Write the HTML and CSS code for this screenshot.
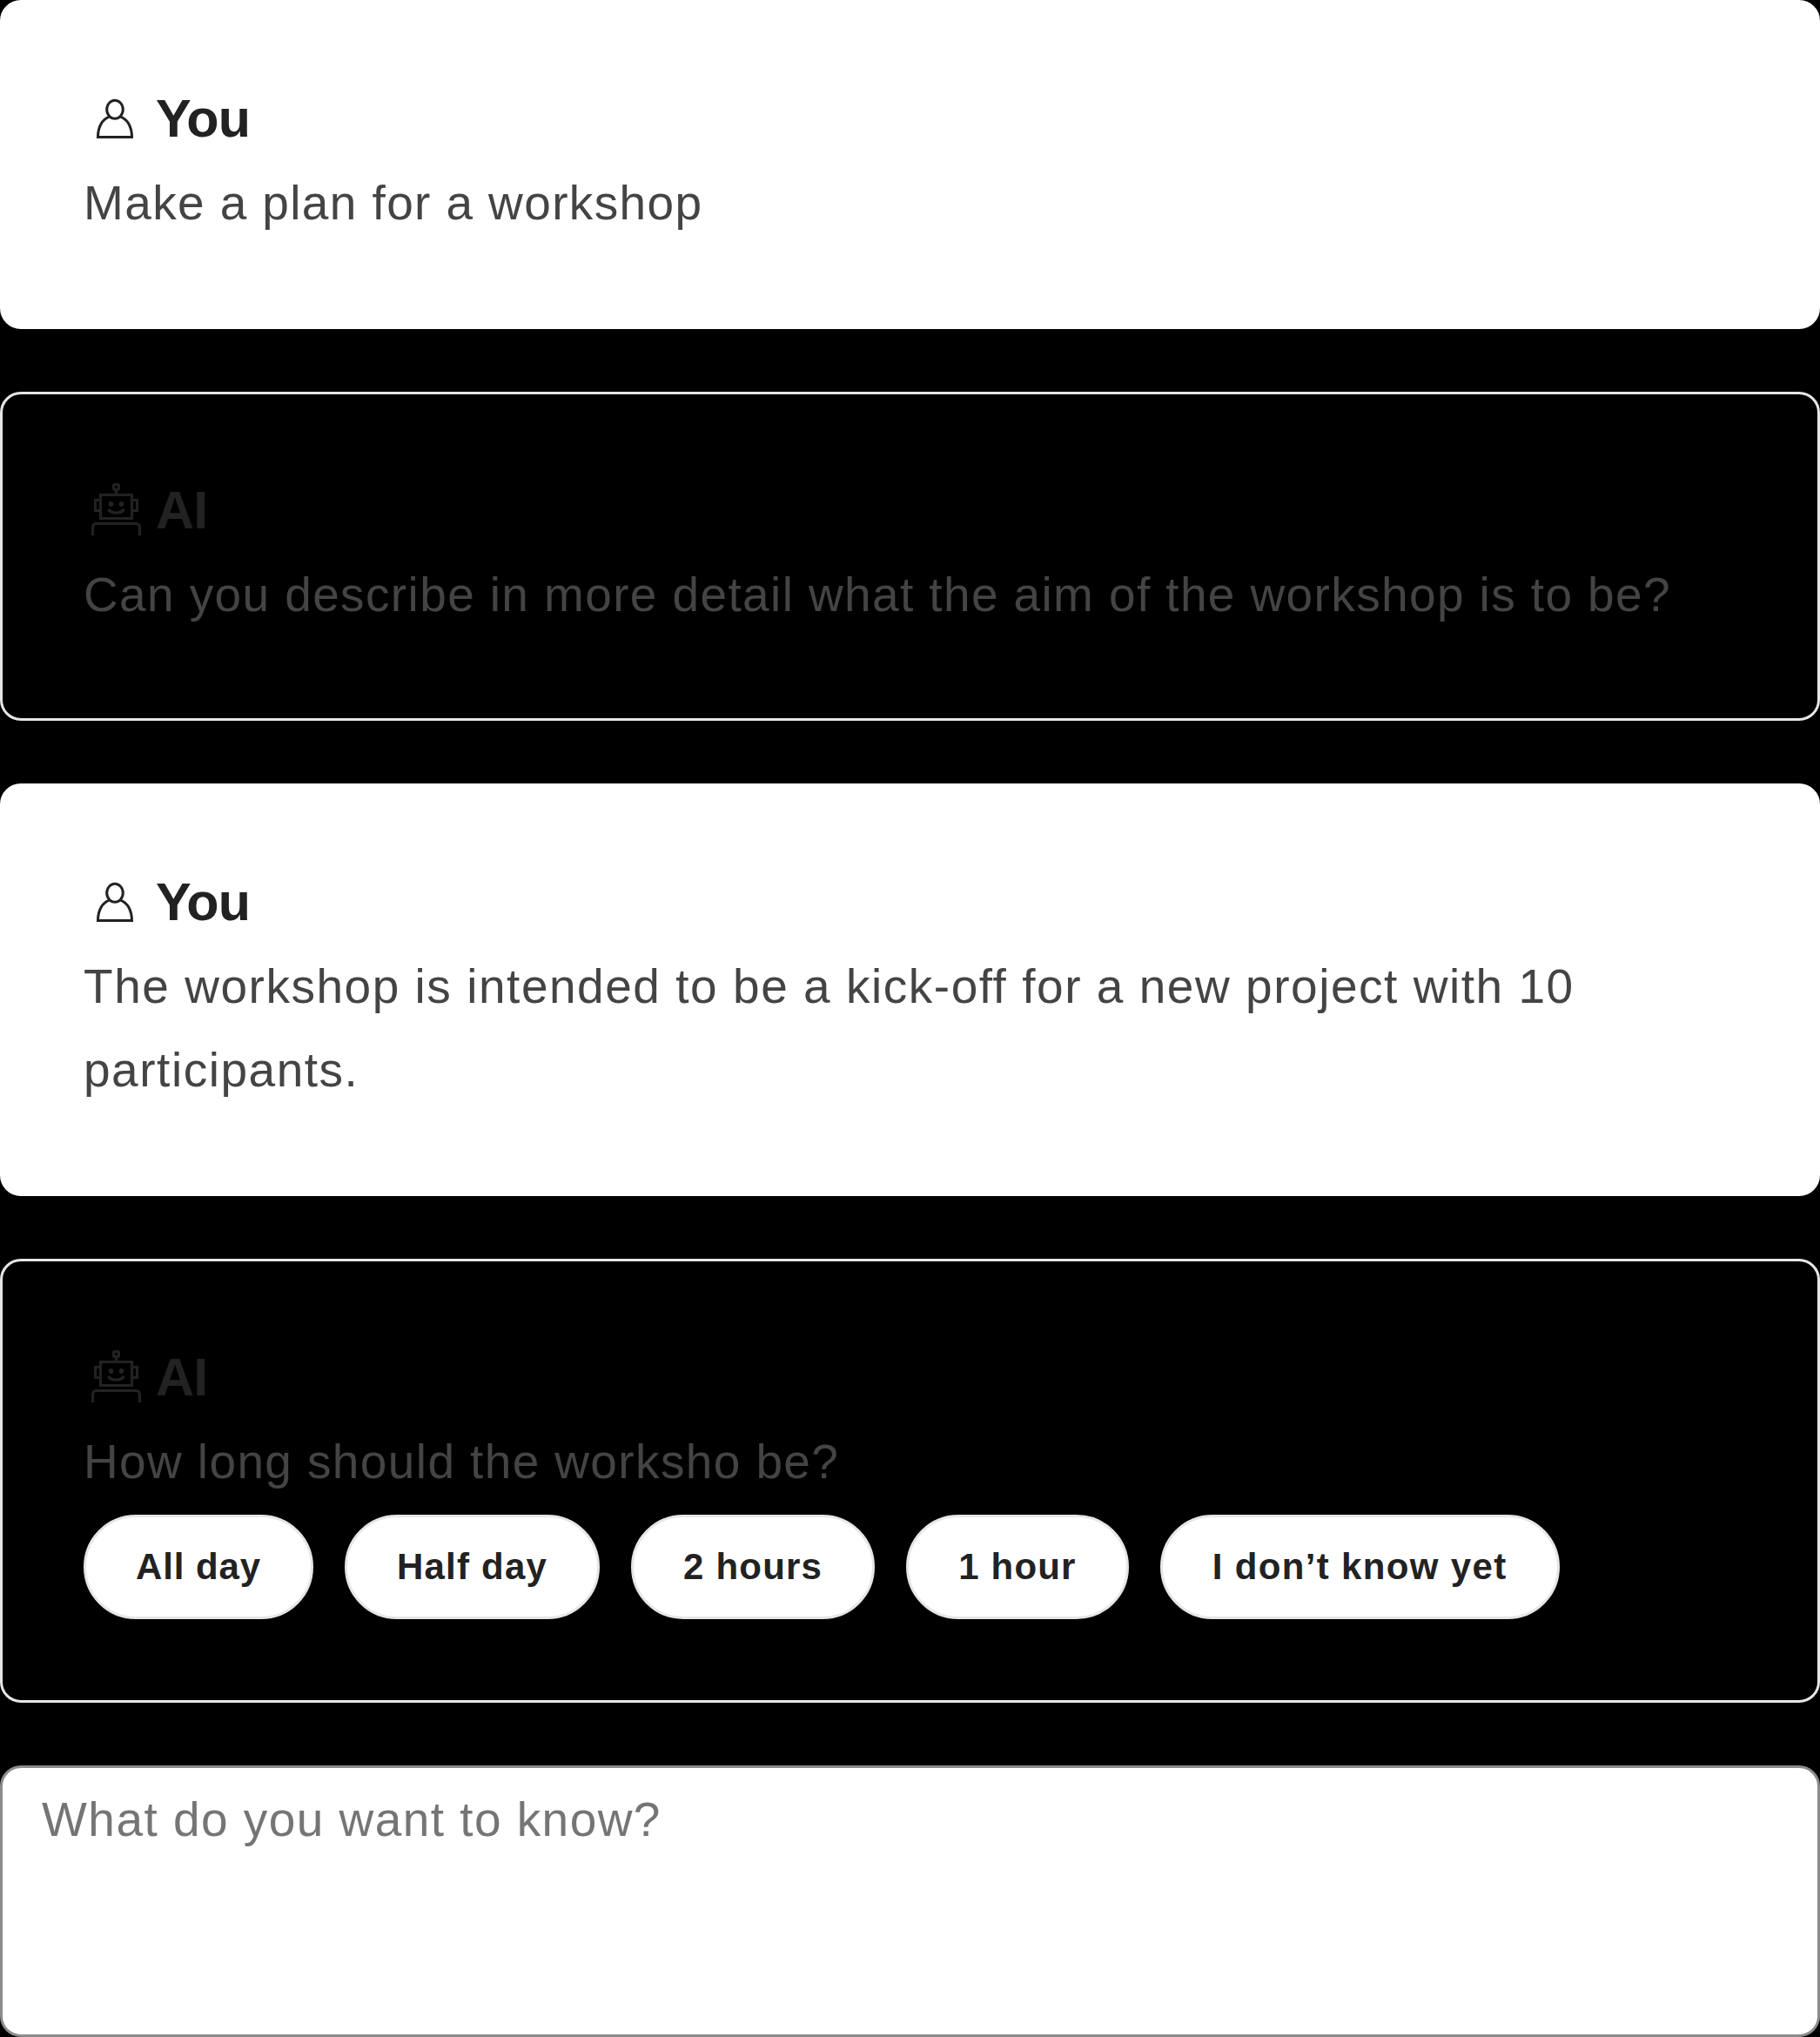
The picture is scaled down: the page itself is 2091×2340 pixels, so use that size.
FILE: index.html
```html
<!DOCTYPE html>
<html lang="en">
<head>
<meta charset="utf-8">
<title>Chat</title>
<link rel="stylesheet" href="styles.css">
</head>
<body>
<svg class="sprite" aria-hidden="true">
  <symbol id="user" viewBox="0 0 72 72">
    <ellipse cx="36" cy="26.8" rx="9.300" ry="10.500"/>
    <path d="M29.500 35.200C21.500 38 16.500 47 16.500 58.500H55.500C55.500 47 50.500 38 42.500 35.200"/>
  </symbol>
  <symbol id="robot" viewBox="0 0 72 72">
    <rect x="34.500" y="7.500" width="6" height="6" rx="1.500"/>
    <path d="M37.500 14V19M19.500 25.500H13.500V37.500H19.500M55.500 25.500H61.500V37.500H55.500M10.500 66V57Q10.500 52.500 15 52.500H60Q64.500 52.500 64.500 57V66"/>
    <rect x="19.500" y="19.500" width="36" height="27"/>
    <path class="smile" d="M28.500 36C32 41.500 43 41.500 46.500 36"/>
    <ellipse class="eye" cx="31.500" cy="30" rx="2.800" ry="3"/>
    <ellipse class="eye" cx="43.500" cy="30" rx="2.800" ry="3"/>
  </symbol>
</svg>
<main class="chat">
  <article class="message message-user">
    <h2 class="author"><svg class="icon"><use href="#user"/></svg><span class="name">You</span></h2>
    <p class="text">Make a plan for a workshop</p>
  </article>
  <article class="message">
    <h2 class="author"><svg class="icon"><use href="#robot"/></svg><span class="name">AI</span></h2>
    <p class="text">Can you describe in more detail what the aim of the workshop is to be?</p>
  </article>
  <article class="message message-user">
    <h2 class="author"><svg class="icon"><use href="#user"/></svg><span class="name">You</span></h2>
    <p class="text text-long">The workshop is intended to be a kick-off for a new project with 10 participants.</p>
  </article>
  <article class="message">
    <h2 class="author"><svg class="icon"><use href="#robot"/></svg><span class="name">AI</span></h2>
    <p class="text">How long should the worksho be?</p>
    <div class="replies">
      <button class="reply">All day</button>
      <button class="reply">Half day</button>
      <button class="reply">2 hours</button>
      <button class="reply">1 hour</button>
      <button class="reply">I don’t know yet</button>
    </div>
  </article>
  <textarea class="prompt" placeholder="What do you want to know?"></textarea>
</main>
</body>
</html>
```
FILE: styles.css
```css
* { box-sizing: border-box; }
body {
  margin: 0;
  background: #000;
  color: #222;
  font-family: "Liberation Sans", Arial, sans-serif;
}
.sprite { display: none; }
.chat { display: flex; flex-direction: column; gap: 72px; }
.message {
  padding: 93px;
  border: 3px solid #e6e6e6;
  border-radius: 24px;
}
.message-user { background: #fff; border-color: #fff; }
.author {
  display: flex;
  align-items: center;
  gap: 11px;
  height: 78px;
  margin: 0 0 11px;
  font-size: 61px;
  line-height: 78px;
  letter-spacing: -0.8px;
}
.name { padding-top: 2px; }
.icon {
  width: 72px;
  height: 72px;
  fill: none;
  stroke: #222;
  stroke-width: 3px;
}
.eye { fill: #222; stroke: none; }
.smile { stroke-width: 3.4px; }
.text {
  margin: 0;
  padding-bottom: 1px;
  color: #444;
  font-size: 55px;
  line-height: 96px;
  letter-spacing: 1.38px;
}
.text-long { letter-spacing: 1.53px; }
.replies { display: flex; gap: 36px; margin-top: 12px; }
.reply {
  height: 120px;
  padding: 0 57px;
  border: 3px solid #e6e6e6;
  border-radius: 60px;
  background: #fff;
  color: #222;
  font: bold 42px/60px "Liberation Sans", Arial, sans-serif;
  letter-spacing: 1.2px;
  white-space: nowrap;
}
.reply:first-child { letter-spacing: 0.9px; }
.reply:last-child { letter-spacing: 1.35px; }
.prompt {
  display: block;
  width: 100%;
  height: 312px;
  padding: 11px 45px;
  border: 3px solid #8c8c8c;
  border-radius: 24px;
  background: #fff;
  color: #222;
  font: 55px/96px "Liberation Sans", Arial, sans-serif;
  letter-spacing: 1.45px;
  resize: none;
}
.prompt::placeholder { color: #757575; }
```
